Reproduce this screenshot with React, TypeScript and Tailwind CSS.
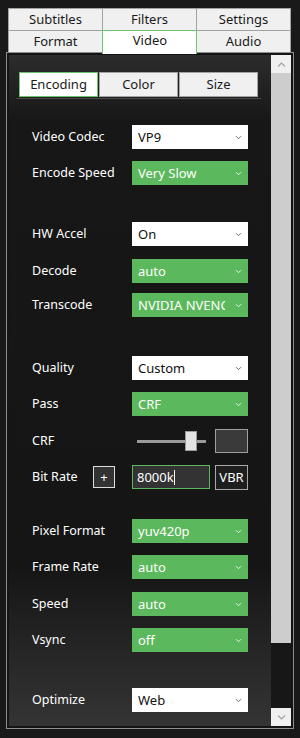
import React from 'react';

const font = { fontFamily: '"Noto Sans", "Open Sans", sans-serif' };

function Chevron({ light }: { light?: boolean }) {
    return (
        <svg width="7" height="5" viewBox="0 0 7 5" className="shrink-0">
            <path d="M1 1.2 L3.5 3.7 L6 1.2" fill="none" stroke={light ? '#e8f5e8' : '#6a6a6a'} strokeWidth="1" />
        </svg>
    );
}

function Select({ value, green }: { value: string; green?: boolean }) {
    return (
        <div
            className={`w-[116px] h-6 flex items-center pl-[6px] pr-[6px] overflow-hidden ${
                green ? 'bg-[#5cb85c] text-white' : 'bg-white text-[#111]'
            }`}
        >
            <span className="flex-1 mr-[10px] whitespace-nowrap overflow-hidden text-[13px] leading-[18px]">{value}</span>
            <Chevron light={green} />
        </div>
    );
}

function Row({ label, value, green, mt }: { label: string; value: string; green?: boolean; mt: string }) {
    return (
        <div className={`flex items-center h-6 ${mt}`}>
            <span className="w-[100px] text-white text-[12.5px] leading-[18px] whitespace-nowrap">{label}</span>
            <Select value={value} green={green} />
        </div>
    );
}

export default function App() {
    const topRow1 = ['Subtitles', 'Filters', 'Settings'];
    const topRow2 = ['Format', 'Video', 'Audio'];

    return (
        <div className="w-[300px] h-[738px] bg-[#191919] pt-2 overflow-hidden" style={font}>
            {/* main tabs */}
            <div className="ml-2 w-[283px] grid grid-cols-3 border-l border-t border-[#a3a3a3]">
                {topRow1.map((t) => (
                    <div key={t} className="h-[22px] flex items-center justify-center bg-[#f0f0f0] border-r border-b border-[#a3a3a3] text-[13px] text-[#1a1a1a]">
                        {t}
                    </div>
                ))}
                {topRow2.map((t) =>
                    t === 'Video' ? (
                        <div key={t} className="relative z-10 h-[21px] flex items-center justify-center bg-white text-[13px] text-[#1a1a1a]">
                            <div className="absolute -top-px -left-px right-0 -bottom-[2px] border border-[#6cc46c] border-b-0 bg-white" />
                            <span className="relative -mt-[2px]">{t}</span>
                        </div>
                    ) : (
                        <div key={t} className="h-[21px] flex items-center justify-center bg-[#f0f0f0] border-r border-[#a3a3a3] text-[13px] text-[#1a1a1a]">
                            {t}
                        </div>
                    )
                )}
            </div>

            {/* panel */}
            <div className="ml-[6px] w-[288px] h-[677px] border border-[#8e8e8e] p-[2px] flex bg-[#141414]">
                <div className="flex-1 pl-[10px] pt-[17px] bg-[linear-gradient(to_bottom,#2c2c2c_0%,#171717_10%,#151515_76%,#343434_100%)]">
                    {/* sub tabs */}
                    <div className="flex w-[245px] -ml-[3px] pl-[3px] border-b border-[#4a4a4a] pb-px">
                        <div className="w-[79px] h-[25px] flex items-center justify-center bg-white border border-[#6cc46c] text-[13px] text-[#1a1a1a]">
                            Encoding
                        </div>
                        <div className="ml-px w-[79px] h-[25px] flex items-center justify-center bg-[#f0f0f0] border border-[#a3a3a3] text-[13px] text-[#1a1a1a]">
                            Color
                        </div>
                        <div className="ml-px w-[79px] h-[25px] flex items-center justify-center bg-[#f0f0f0] border border-[#a3a3a3] text-[13px] text-[#1a1a1a]">
                            Size
                        </div>
                    </div>

                    <div className="pl-[13px]">
                        <Row label="Video Codec" value="VP9" mt="mt-[26px]" />
                        <Row label="Encode Speed" value="Very Slow" green mt="mt-[12px]" />

                        <Row label="HW Accel" value="On" mt="mt-[37px]" />
                        <Row label="Decode" value="auto" green mt="mt-[13px]" />
                        <Row label="Transcode" value="NVIDIA NVENC" green mt="mt-[10px]" />

                        <Row label="Quality" value="Custom" mt="mt-[39px]" />
                        <Row label="Pass" value="CRF" green mt="mt-[12px]" />

                        {/* CRF slider */}
                        <div className="flex items-center h-6 mt-[13px]">
                            <span className="w-[100px] text-white text-[12.5px] leading-[18px]">CRF</span>
                            <div className="w-[83px] flex items-center pl-[5px]">
                                <div className="relative w-[69px] h-[20px] flex items-center">
                                    <div className="w-full h-[3px] bg-[#9a9a9a]" />
                                    <div className="absolute left-[48px] top-0 w-[12px] h-[20px] bg-[#e3e3e3] border border-[#9a9a9a]" />
                                </div>
                            </div>
                            <div className="w-[33px] h-6 bg-[#3a3a3a] border border-[#a0a0a0]" />
                        </div>

                        {/* Bit rate */}
                        <div className="flex items-center h-6 mt-[12px]">
                            <span className="w-[61px] text-white text-[12.5px] leading-[18px]">Bit Rate</span>
                            <div className="w-[22px] h-[22px] flex items-center justify-center bg-[#333] border border-[#dcdcdc] text-white text-[13px] leading-[18px]">
                                +
                            </div>
                            <div className="ml-[17px] w-[78px] h-6 flex items-center bg-[#333] border border-[#5cb85c] pl-[4px] text-white text-[13px] leading-[18px]">
                                8000k<span className="w-px h-[15px] bg-white" />
                            </div>
                            <div className="ml-[5px] w-[33px] h-[25px] flex items-center justify-center bg-[#1e1e1e] border border-[#a8a8a8] text-white text-[13px] leading-[18px]">
                                VBR
                            </div>
                        </div>

                        <Row label="Pixel Format" value="yuv420p" green mt="mt-[30px]" />
                        <Row label="Frame Rate" value="auto" green mt="mt-[12px]" />
                        <Row label="Speed" value="auto" green mt="mt-[13px]" />
                        <Row label="Vsync" value="off" green mt="mt-[12px]" />

                        <Row label="Optimize" value="Web" mt="mt-[36px]" />
                    </div>
                </div>

                {/* scrollbar */}
                <div className="w-[20px] flex flex-col bg-[#171717]">
                    <div className="h-[18px] bg-[#f0f0f0] flex items-center justify-center">
                        <svg width="9" height="5" viewBox="0 0 9 5">
                            <path d="M1 4.5 L4.5 1 L8 4.5" fill="none" stroke="#a0a0a0" strokeWidth="1.1" />
                        </svg>
                    </div>
                    <div className="h-[570px] bg-[#cdcdcd]" />
                    <div className="flex-1" />
                    <div className="h-[18px] bg-[#f0f0f0] flex items-center justify-center">
                        <svg width="9" height="5" viewBox="0 0 9 5">
                            <path d="M1 0.5 L4.5 4 L8 0.5" fill="none" stroke="#a0a0a0" strokeWidth="1.1" />
                        </svg>
                    </div>
                </div>
            </div>
        </div>
    );
}
